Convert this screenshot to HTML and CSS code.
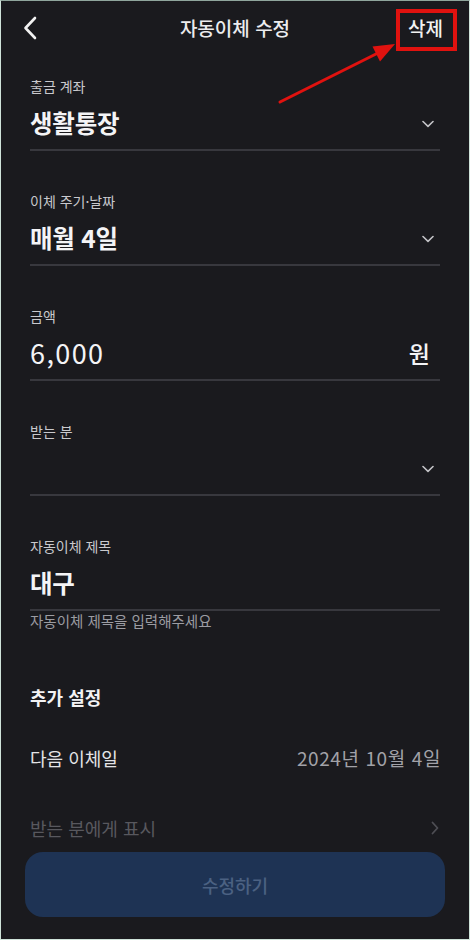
FILE: index.html
```html
<!DOCTYPE html>
<html lang="ko">
<head>
<meta charset="utf-8">
<title>자동이체 수정</title>
<link rel="stylesheet" href="styles.css">
</head>
<body>
<div class="screen">
  <header class="topbar">
    <button class="back" aria-label="뒤로">
      <svg width="14" height="24" viewBox="0 0 14 24"><path d="M12 2 L2.5 12 L12 22" fill="none" stroke="#f2f2f2" stroke-width="2.6" stroke-linecap="round" stroke-linejoin="round"/></svg>
    </button>
    <h1 class="title">자동이체 수정</h1>
    <span class="delete">삭제</span>
  </header>

  <main class="content">
    <section class="field">
      <div class="label">출금 계좌</div>
      <div class="value-row">
        <span class="value">생활통장</span>
        <svg class="chev-down" width="12" height="8" viewBox="0 0 12 8"><path d="M1 1.5 L6 6.3 L11 1.5" fill="none" stroke="#c4c4c8" stroke-width="1.6" stroke-linecap="round" stroke-linejoin="round"/></svg>
      </div>
      <div class="line"></div>
    </section>

    <section class="field">
      <div class="label">이체 주기·날짜</div>
      <div class="value-row">
        <span class="value">매월 4일</span>
        <svg class="chev-down" width="12" height="8" viewBox="0 0 12 8"><path d="M1 1.5 L6 6.3 L11 1.5" fill="none" stroke="#c4c4c8" stroke-width="1.6" stroke-linecap="round" stroke-linejoin="round"/></svg>
      </div>
      <div class="line"></div>
    </section>

    <section class="field">
      <div class="label">금액</div>
      <div class="value-row">
        <span class="value num">6,000</span>
        <span class="unit">원</span>
      </div>
      <div class="line"></div>
    </section>

    <section class="field">
      <div class="label">받는 분</div>
      <div class="value-row">
        <span class="value"></span>
        <svg class="chev-down" width="12" height="8" viewBox="0 0 12 8"><path d="M1 1.5 L6 6.3 L11 1.5" fill="none" stroke="#c4c4c8" stroke-width="1.6" stroke-linecap="round" stroke-linejoin="round"/></svg>
      </div>
      <div class="line"></div>
    </section>

    <section class="field">
      <div class="label">자동이체 제목</div>
      <div class="value-row">
        <span class="value">대구</span>
      </div>
      <div class="line"></div>
      <div class="helper">자동이체 제목을 입력해주세요</div>
    </section>

    <h2 class="section-title">추가 설정</h2>

    <div class="row">
      <span class="row-label">다음 이체일</span>
      <span class="row-value">2024년 10월 4일</span>
    </div>

    <div class="row dim">
      <span class="row-label">받는 분에게 표시</span>
      <svg width="8" height="14" viewBox="0 0 8 14"><path d="M1.5 1.5 L6.5 7 L1.5 12.5" fill="none" stroke="#4e4e54" stroke-width="1.8" stroke-linecap="round" stroke-linejoin="round"/></svg>
    </div>

    <button class="submit">수정하기</button>
  </main>

  <div class="mark-box"></div>
  <svg class="mark-arrow" width="470" height="120" viewBox="0 0 470 120">
    <line x1="280" y1="102" x2="378" y2="53" stroke="#e0120f" stroke-width="3" stroke-linecap="round"/>
    <polygon points="395,44 372.5,46.5 380,61.5" fill="#e0120f"/>
  </svg>
</div>
</body>
</html>
```

FILE: styles.css
```css
* { box-sizing: border-box; }

html, body {
  margin: 0;
  padding: 0;
  background: #1a1a1e;
}

body {
  font-family: "Noto Sans CJK KR", "Noto Sans", sans-serif;
  color: #f0f0f2;
}

.screen {
  position: relative;
  width: 470px;
  height: 940px;
  border: 1px solid #cfe3da;
  border-top-color: #8fa59c;
  background: #1a1a1e;
  overflow: hidden;
}

.topbar {
  height: 54px;
  display: flex;
  align-items: center;
  justify-content: space-between;
  padding: 0 24px 0 22px;
  position: relative;
}

.back {
  background: none;
  border: 0;
  padding: 0;
  width: 16px;
  height: 24px;
  display: flex;
  align-items: center;
}

.title {
  position: absolute;
  left: 0;
  right: 0;
  text-align: center;
  margin: 0;
  font-size: 19px;
  font-weight: 500;
  line-height: 26px;
  color: #ececee;
  pointer-events: none;
}

.delete {
  font-size: 19px;
  font-weight: 500;
  line-height: 26px;
  color: #f2f2f2;
  margin-right: 2px;
}

.content {
  padding: 21px 29px 0 29px;
  display: flex;
  flex-direction: column;
}

.field + .field { margin-top: 40px; }

.label {
  font-size: 14px;
  line-height: 20px;
  color: #c9c9cd;
}

.value-row {
  margin-top: 8px;
  height: 38px;
  display: flex;
  align-items: center;
  justify-content: space-between;
  padding-right: 6px;
}

.value {
  font-size: 24.5px;
  font-weight: 700;
  line-height: 34px;
  color: #f4f4f6;
  letter-spacing: -0.2px;
}

.value.num {
  font-weight: 400;
  font-size: 27px;
  letter-spacing: 1.4px;
}

.unit {
  font-size: 23px;
  font-weight: 500;
  color: #f4f4f6;
  margin-right: 4px;
}

.chev-down { margin-top: 1px; }

.line {
  margin-top: 7px;
  height: 2px;
  background: #38383e;
}

.helper {
  margin-top: 0;
  font-size: 14.5px;
  line-height: 20px;
  color: #9c9ca2;
}

.section-title {
  margin: 53px 0 0 0;
  font-size: 18px;
  font-weight: 700;
  line-height: 26px;
  color: #f2f2f4;
}

.row {
  display: flex;
  align-items: center;
  justify-content: space-between;
  height: 26px;
  margin-top: 35px;
}

.row + .row { margin-top: 44px; }

.row-label {
  font-size: 18px;
  line-height: 26px;
  color: #e4e4e6;
}

.row-value {
  font-size: 19px;
  line-height: 26px;
  color: #a2a2a8;
  letter-spacing: 0.6px;
  margin-right: -1px;
}

.row.dim .row-label { color: #58585e; }
.row.dim svg { margin-right: 1px; }

.submit {
  margin: 11px -5px 0 -5px;
  height: 65px;
  border: 0;
  border-radius: 18px;
  background: #1e3354;
  color: #4b6182;
  font-family: inherit;
  font-size: 18px;
  font-weight: 500;
}

.mark-box {
  position: absolute;
  left: 395px;
  top: 8px;
  width: 61px;
  height: 42px;
  border: 4px solid #e0120f;
}

.mark-arrow {
  position: absolute;
  left: -1px;
  top: -1px;
  pointer-events: none;
}
```
